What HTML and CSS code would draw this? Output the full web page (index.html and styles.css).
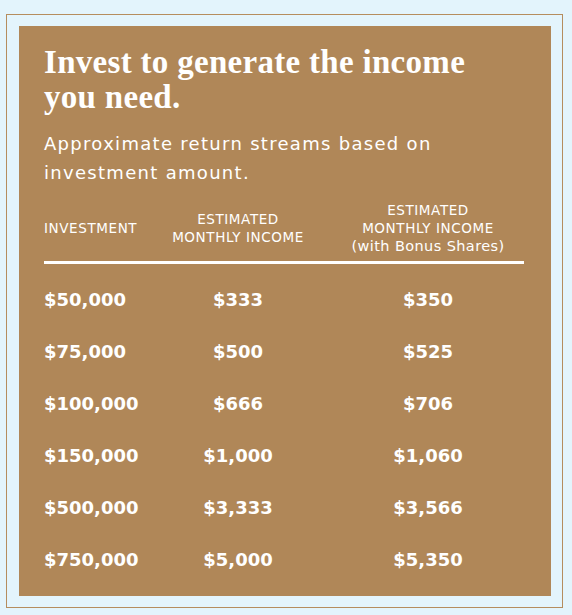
FILE: index.html
```html
<!DOCTYPE html>
<html>
<head>
<meta charset="utf-8">
<link rel="stylesheet" href="styles.css">
</head>
<body>
<div class="frame">
  <section class="card">
    <h1 class="title">Invest to generate the income you need.</h1>
    <p class="lead">Approximate return streams based on investment amount.</p>
    <div class="table">
      <div class="head">
        <div class="c1">INVESTMENT</div>
        <div class="c2">ESTIMATED<br>MONTHLY INCOME</div>
        <div class="c3">ESTIMATED<br>MONTHLY INCOME<br><span class="lc">(with Bonus Shares)</span></div>
      </div>
      <div class="row"><div class="c1">$50,000</div><div class="c2">$333</div><div class="c3">$350</div></div>
      <div class="row"><div class="c1">$75,000</div><div class="c2">$500</div><div class="c3">$525</div></div>
      <div class="row"><div class="c1">$100,000</div><div class="c2">$666</div><div class="c3">$706</div></div>
      <div class="row"><div class="c1">$150,000</div><div class="c2">$1,000</div><div class="c3">$1,060</div></div>
      <div class="row"><div class="c1">$500,000</div><div class="c2">$3,333</div><div class="c3">$3,566</div></div>
      <div class="row"><div class="c1">$750,000</div><div class="c2">$5,000</div><div class="c3">$5,350</div></div>
    </div>
  </section>
</div>
</body>
</html>
```
FILE: styles.css
```css
* { box-sizing: border-box; }
html, body { margin: 0; padding: 0; }
body {
  background: #e3f4fc;
  font-family: "DejaVu Sans", "Open Sans", sans-serif;
  color: #fff;
  padding-top: 14px;
}
.frame {
  margin-left: 6px;
  width: 557px;
  border: 1px solid #b58d5e;
  padding: 11px 11px 11px 12px;
}
.card {
  background: #b08758;
  height: 570px;
  padding: 19px 27px 0 25px;
}
.title {
  margin: 0;
  font-family: "Liberation Serif", "DejaVu Serif", serif;
  font-weight: 700;
  font-size: 33px;
  line-height: 35px;
  letter-spacing: 0.3px;
  width: 450px;
}
.lead {
  margin: 14px 0 0;
  font-size: 18px;
  line-height: 29px;
  letter-spacing: 1.3px;
  width: 430px;
}
.table { margin-top: 14px; }
.head, .row {
  display: grid;
  grid-template-columns: 100px 188px 192px;
  align-items: center;
}
.head {
  font-size: 13.5px;
  line-height: 18px;
  letter-spacing: 0.6px;
  padding-bottom: 6px;
  border-bottom: 3px solid #fff;
}
.head .c2, .head .c3 { text-align: center; }
.lc { font-size: 14.5px; letter-spacing: 0.4px; }
.row {
  height: 52px;
  font-size: 18px;
  font-weight: 700;
}
.row .c2, .row .c3 { text-align: center; }
.head + .row { margin-top: 9px; }
```
